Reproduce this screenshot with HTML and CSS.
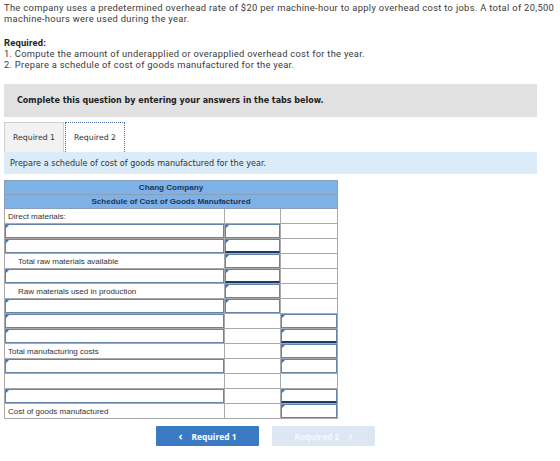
FILE: index.html
```html
<!DOCTYPE html>
<html>
<head>
<meta charset="utf-8">
<link rel="stylesheet" href="styles.css">
</head>
<body>
<div class="page">
  <p class="intro">The company uses a predetermined overhead rate of $20 per machine-hour to apply overhead cost to jobs. A total of 20,500 machine-hours were used during the year.</p>
  <p class="req-title">Required:</p>
  <div class="req">1. Compute the amount of underapplied or overapplied overhead cost for the year.</div>
  <div class="req">2. Prepare a schedule of cost of goods manufactured for the year.</div>

  <div class="notice">Complete this question by entering your answers in the tabs below.</div>

  <div class="tabs">
    <div class="tab">Required 1</div>
    <div class="tab active">Required 2</div>
  </div>
  <div class="band">Prepare a schedule of cost of goods manufactured for the year.</div>

  <table class="sched">
    <colgroup><col class="c1"><col class="c2"><col class="c3"></colgroup>
    <tr class="hd"><th colspan="3">Chang Company</th></tr>
    <tr class="hd"><th colspan="3">Schedule of Cost of Goods Manufactured</th></tr>
    <tr><td class="lbl">Direct materials:</td><td></td><td></td></tr>
    <tr><td><div class="in"></div></td><td><div class="in"></div></td><td></td></tr>
    <tr><td><div class="in"></div></td><td><div class="in ul"></div></td><td></td></tr>
    <tr><td class="lbl ind">Total raw materials available</td><td><div class="in"></div></td><td></td></tr>
    <tr><td><div class="in"></div></td><td><div class="in ul"></div></td><td></td></tr>
    <tr><td class="lbl ind">Raw materials used in production</td><td><div class="in"></div></td><td></td></tr>
    <tr><td><div class="in"></div></td><td><div class="in"></div></td><td></td></tr>
    <tr><td><div class="in"></div></td><td></td><td><div class="in"></div></td></tr>
    <tr><td><div class="in"></div></td><td></td><td><div class="in ul"></div></td></tr>
    <tr><td class="lbl">Total manufacturing costs</td><td></td><td><div class="in"></div></td></tr>
    <tr><td><div class="in"></div></td><td></td><td><div class="in"></div></td></tr>
    <tr><td></td><td></td><td></td></tr>
    <tr><td><div class="in"></div></td><td></td><td><div class="in ul"></div></td></tr>
    <tr><td class="lbl">Cost of goods manufactured</td><td></td><td><div class="in"></div></td></tr>
  </table>

  <div class="nav">
    <div class="btn prev"><span class="chev">&lsaquo;</span>Required 1</div>
    <div class="btn next">Required 2<span class="chev">&rsaquo;</span></div>
  </div>
</div>
</body>
</html>
```
FILE: styles.css
```css
html, body { margin: 0; padding: 0; background: #fff; }
.page { padding: 2px 4px 0 4px; font-family: Roboto, "Liberation Sans", sans-serif; color: #3a3a3a; }
.intro { margin: 0; font-size: 9.35px; line-height: 11px; letter-spacing: 0.32px; width: 556px; }
.req-title { margin: 13px 0 0 0; font-size: 9.35px; line-height: 11px; font-weight: 700; color: #222; letter-spacing: 0.2px; }
.req { margin: 0; font-size: 9.35px; line-height: 11px; height: 11px; letter-spacing: 0.28px; }
.notice {
  margin-top: 14px; width: 533px; height: 33px; box-sizing: border-box;
  background: #e1e1e1; padding: 0 13px;
  font-family: "DejaVu Sans", Verdana, sans-serif; font-weight: 700; font-size: 8px;
  line-height: 33px; color: #222;
}
.tabs { display: flex; margin-top: 5px; height: 30px; }
.tab {
  width: 60px; box-sizing: border-box; height: 30px; line-height: 30px; text-align: center;
  font-family: "DejaVu Sans", Verdana, sans-serif; font-size: 7.8px; color: #333;
  background: #f2f2f2; border: 1px solid #d0d0d0; border-bottom: none;
}
.tab.active { background: #fff; border: 1px dotted #4a6d9a; border-bottom: none; margin-left: 1px; }
.band {
  width: 533px; height: 22px; box-sizing: border-box; background: #dcebf8;
  padding-left: 6px; line-height: 22px;
  font-family: "DejaVu Sans", Verdana, sans-serif; font-size: 8.1px; color: #333;
}
.sched {
  margin-top: 6px; border-collapse: collapse; table-layout: fixed; width: 333px;
  font-family: "Liberation Sans", Arial, sans-serif; font-size: 8px; color: #333;
}
.c1 { width: 220px; } .c2 { width: 56px; } .c3 { width: 57px; }
.sched th {
  background: #7eb1e6; border: 1px solid #8a9fb8; height: 13px; padding: 0;
  font-weight: 700; color: #1d3557; text-align: center; font-size: 8.1px;
}
.sched td { border: 1px solid #a9a9a9; height: 14px; padding: 0; vertical-align: middle; }
.sched td.lbl { padding-left: 3px; white-space: nowrap; }
.sched td.ind { padding-left: 13px; }
.in {
  position: relative; height: 14px; box-sizing: border-box;
  border: 1px solid #6684aa; background: #fff;
}
.in::before {
  content: ""; position: absolute; left: 0; top: 0;
  border-top: 3px solid #3b6fb5; border-right: 3px solid transparent;
}
.in.ul { border-bottom: 2px solid #1f3a63; }
.nav { display: flex; margin-top: 7px; padding-left: 152px; gap: 13px; }
.btn {
  width: 103px; height: 20px; box-sizing: border-box; text-align: center; line-height: 20px;
  font-family: "Open Sans", "Liberation Sans", sans-serif; font-weight: 700; font-size: 8.4px;
  border-radius: 1px;
}
.btn.prev { background: #3a7ac4; color: #fff; }
.btn.next { background: #dde7f3; color: #f4f7fb; }
.chev { font-size: 11px; font-weight: 700; }
.prev .chev { margin-right: 9px; }
.next .chev { margin-left: 9px; }
```
